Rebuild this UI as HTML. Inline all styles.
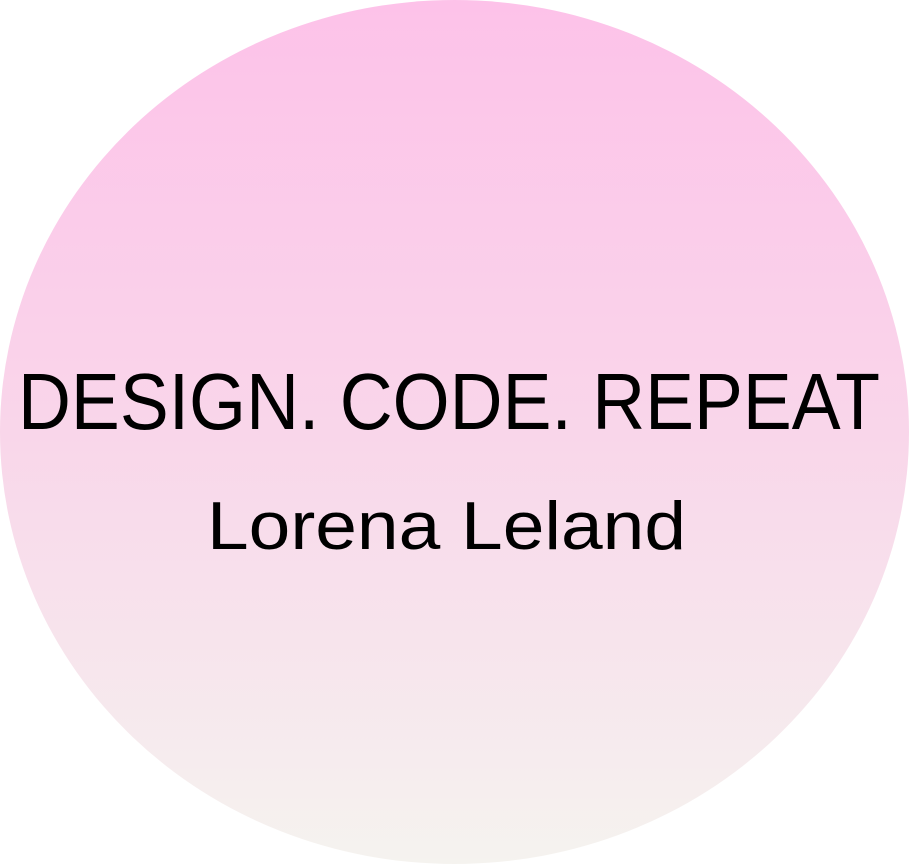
<!DOCTYPE html>
<html><head><meta charset="utf-8"><style>
html,body{margin:0;padding:0;background:#fff;width:909px;height:864px;overflow:hidden}
</style></head><body>
<svg width="909" height="864" viewBox="0 0 909 864" xmlns="http://www.w3.org/2000/svg">
<defs><linearGradient id="g" x1="0" y1="0" x2="0" y2="1">
<stop offset="0" stop-color="#fdc2e9"/>
<stop offset="0.5" stop-color="#f9d6ea"/>
<stop offset="1" stop-color="#f5f3ef"/>
</linearGradient></defs>
<ellipse cx="454.5" cy="432" rx="454.5" ry="432" fill="url(#g)"/>
<text x="18" y="429" textLength="862" lengthAdjust="spacingAndGlyphs" font-family="Liberation Sans, sans-serif" font-size="80" fill="#000">DESIGN. CODE. REPEAT</text>
<text x="207" y="549" textLength="479" lengthAdjust="spacingAndGlyphs" font-family="Liberation Sans, sans-serif" font-size="68" fill="#000">Lorena Leland</text>
</svg>
</body></html>
